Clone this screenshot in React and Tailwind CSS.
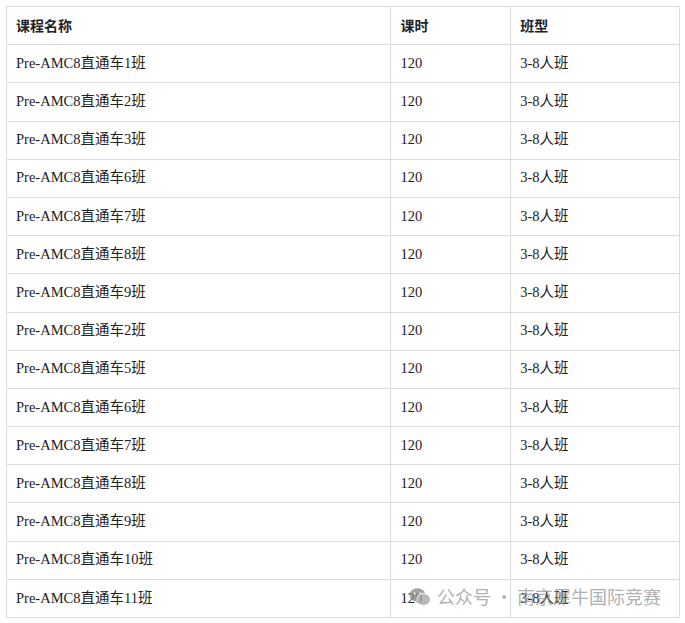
export default function App() {
  const names = [1,2,3,6,7,8,9,2,5,6,7,8,9,10,11];
  const cell = "border border-[#dcdcdc] px-[9px] h-[38.2px] align-middle";
  return (
    <div className="w-[685px] h-[623px] bg-white relative overflow-hidden" style={{fontFamily:'"Liberation Serif","Noto Sans CJK SC",serif'}}>
      <table className="absolute left-[6px] top-[6px] w-[674px] border-collapse text-[14.5px] text-[#222]">
        <colgroup><col className="w-[385px]"/><col className="w-[120px]"/><col className="w-[169px]"/></colgroup>
        <thead>
          <tr className="font-bold text-left text-[14px]" style={{fontFamily:'"Noto Sans CJK SC",sans-serif'}}>
            <th className={cell}>课程名称</th><th className={cell}>课时</th><th className={cell}>班型</th>
          </tr>
        </thead>
        <tbody>
          {names.map((n,i)=>(
            <tr key={i}>
              <td className={cell}>Pre-AMC8直通车{n}班</td>
              <td className={cell}>120</td>
              <td className={cell}>3-8人班</td>
            </tr>
          ))}
        </tbody>
      </table>
      <div className="absolute left-[409px] top-[583px] flex items-center gap-[6px] text-[18px] text-[#9a9a9a]/80" style={{fontFamily:'"Noto Sans CJK SC",sans-serif'}}>
        <svg width="22" height="20" viewBox="0 0 22 20" className="opacity-80">
          <ellipse cx="8.5" cy="8" rx="8" ry="6.8" fill="#8c8c8c"/>
          <ellipse cx="14.5" cy="12.5" rx="7" ry="6" fill="#a8a8a8" stroke="#fff" strokeWidth="1"/>
          <circle cx="5.5" cy="6.5" r="1" fill="#fff"/><circle cx="11" cy="6.5" r="1" fill="#fff"/>
        </svg>
        <span>公众号 · 南京犀牛国际竞赛</span>
      </div>
    </div>
  );
}
